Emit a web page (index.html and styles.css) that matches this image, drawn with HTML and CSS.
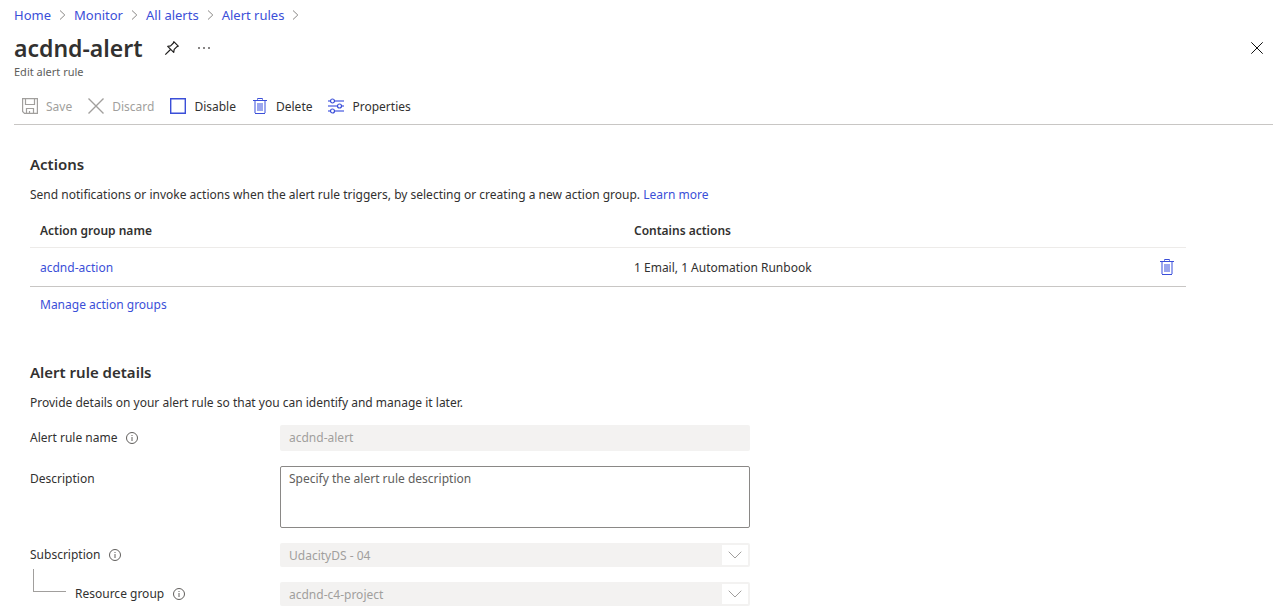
FILE: index.html
```html
<!DOCTYPE html>
<html lang="en">
<head>
<meta charset="utf-8">
<meta name="viewport" content="width=device-width, initial-scale=1">
<title>acdnd-alert - Edit alert rule</title>
<link rel="stylesheet" href="styles.css">
</head>
<body>
<svg class="sprite" aria-hidden="true">
  <symbol id="chevron-right" viewBox="0 0 7 12"><path d="M1 1.5 5.8 6 1 10.5" fill="none" stroke="#8a8886"/></symbol>
  <symbol id="trash" viewBox="0 0 16 16">
    <path d="M3 3v12M13 3v12" stroke="#9ba6ee" stroke-width="2" fill="none"/>
    <path d="M5 5h6v8H5z" fill="#9ba6ee"/>
    <path d="M1 2.500h14M3 15.500h10M6 .5h4" stroke="#3b4fd8" fill="none"/>
    <path d="M5.500 0v2M10.500 0v2" stroke="#7583e5" fill="none"/>
  </symbol>
  <symbol id="info" viewBox="0 0 12 12"><circle cx="6" cy="6" r="5.500" fill="none" stroke="#605e5c"/><path d="M6 5v4M6 3v1" stroke="#605e5c"/></symbol>
  <symbol id="chevron-down" viewBox="0 0 14 8"><path d="M.7 .7 7 7 13.300 .7" fill="none" stroke="#a19f9d"/></symbol>
</svg>
<header class="header">
  <nav class="breadcrumb" aria-label="Breadcrumb">
    <a href="#">Home</a><svg class="crumb-sep"><use href="#chevron-right"/></svg>
    <a href="#">Monitor</a><svg class="crumb-sep"><use href="#chevron-right"/></svg>
    <a href="#">All alerts</a><svg class="crumb-sep"><use href="#chevron-right"/></svg>
    <a href="#">Alert rules</a><svg class="crumb-sep"><use href="#chevron-right"/></svg>
  </nav>
  <div class="title-row">
    <h1 class="title">acdnd-alert</h1>
    <button class="icon-button pin" aria-label="Pin">
      <svg width="16" height="16" viewBox="0 0 16 16" fill="none" stroke="#201f1e" stroke-width="1.200" stroke-linejoin="round"><path d="M9.800 1.700 14.300 6.200 13 6.600 10.200 9.400 9.700 12.300 3.700 6.300 6.600 5.800 9.400 3ZM6.500 9.500 1.300 14.700"/></svg>
    </button>
    <button class="icon-button more" aria-label="More">
      <svg width="14" height="4" viewBox="0 0 14 4" fill="#605e5c"><circle cx="2" cy="2" r="1"/><circle cx="7" cy="2" r="1"/><circle cx="12" cy="2" r="1"/></svg>
    </button>
    <button class="icon-button close" aria-label="Close">
      <svg width="12" height="12" viewBox="0 0 12 12" stroke="#111"><path d="M.3.3 11.700 11.700M11.700.3.3 11.700"/></svg>
    </button>
  </div>
  <p class="subtitle">Edit alert rule</p>
</header>
<div class="toolbar" role="toolbar" aria-label="Alert rule commands">
  <button class="command" disabled>
    <svg width="16" height="16" viewBox="0 0 16 16" fill="none" stroke="#a19f9d" stroke-width="1.200"><path d="M.6.600h14.800v14.800H2.500L.6 13.500ZM3.500.500v6h9v-6M4.500 15.500v-5h7v5M7.500 15.500v-2.500"/></svg>
    <span class="command-text">Save</span>
  </button>
  <button class="command" disabled>
    <svg width="16" height="16" viewBox="0 0 16 16" fill="none" stroke="#a19f9d" stroke-width="1.400"><path d="M.5.500l15 15M15.500.500l-15 15"/></svg>
    <span class="command-text">Discard</span>
  </button>
  <button class="command">
    <svg width="16" height="16" viewBox="0 0 16 16" fill="none" stroke="#3b4fd8" stroke-width="1.400"><path d="M.7.700h14.600v14.600H.7z"/></svg>
    <span class="command-text">Disable</span>
  </button>
  <button class="command">
    <svg width="16" height="16"><use href="#trash"/></svg>
    <span class="command-text">Delete</span>
  </button>
  <button class="command">
    <svg width="16" height="16" viewBox="0 0 16 16"><path d="M0 3h16M0 8h16M0 13h16" stroke="#8f9bec" stroke-width="2"/><g fill="#fff" stroke="#3b4fd8" stroke-width="1.200"><circle cx="4.500" cy="3" r="2"/><circle cx="11.500" cy="8" r="2"/><circle cx="4.500" cy="13" r="2"/></g></svg>
    <span class="command-text">Properties</span>
  </button>
</div>
<main class="content">
  <section class="actions">
    <h2 class="heading">Actions</h2>
    <p class="intro">Send notifications or invoke actions when the alert rule triggers, by selecting or creating a new action group. <a href="#">Learn more</a></p>
    <table class="groups">
      <thead>
        <tr><th class="col-name">Action group name</th><th>Contains actions</th><th class="col-delete"></th></tr>
      </thead>
      <tbody>
        <tr>
          <td><a href="#">acdnd-action</a></td>
          <td>1 Email, 1 Automation Runbook</td>
          <td class="col-delete"><button class="icon-button" aria-label="Remove acdnd-action"><svg width="16" height="16"><use href="#trash"/></svg></button></td>
        </tr>
      </tbody>
    </table>
    <a class="manage" href="#">Manage action groups</a>
  </section>
  <section class="details">
    <h2 class="heading">Alert rule details</h2>
    <p class="intro">Provide details on your alert rule so that you can identify and manage it later.</p>
    <form class="form">
      <div class="field">
        <label class="label" for="rule-name">Alert rule name <svg class="info"><use href="#info"/></svg></label>
        <input class="control name" id="rule-name" type="text" value="acdnd-alert" disabled>
      </div>
      <div class="field">
        <label class="label label-top" for="description">Description</label>
        <textarea class="control description" id="description" placeholder="Specify the alert rule description"></textarea>
      </div>
      <div class="field">
        <label class="label" for="subscription">Subscription <svg class="info"><use href="#info"/></svg></label>
        <div class="dropdown">
          <select class="control" id="subscription" disabled><option>UdacityDS - 04</option></select>
          <span class="arrow"><svg width="14" height="8"><use href="#chevron-down"/></svg></span>
        </div>
      </div>
      <div class="field">
        <div class="nested">
          <span class="branch"></span>
          <label class="label" for="resource-group">Resource group <svg class="info"><use href="#info"/></svg></label>
        </div>
        <div class="dropdown">
          <select class="control" id="resource-group" disabled><option>acdnd-c4-project</option></select>
          <span class="arrow"><svg width="14" height="8"><use href="#chevron-down"/></svg></span>
        </div>
      </div>
    </form>
  </section>
</main>
</body>
</html>
```
FILE: styles.css
```css
* { box-sizing: border-box; }

body {
  margin: 0;
  background: #fff;
  color: #323130;
  font: 12px/18px "Noto Sans", "Open Sans", sans-serif;
}

h1, h2, p { margin: 0; }
a { color: #3b4fd8; text-decoration: none; }
button, input, textarea, select { font: inherit; color: inherit; }
svg { flex: none; }
.sprite { display: none; }

.header { padding: 5px 14px 0; }
.breadcrumb { display: flex; align-items: center; gap: 8px; font-size: 13px; line-height: 20px; }
.crumb-sep { width: 7px; height: 12px; }

.title-row { display: flex; align-items: center; height: 32px; margin-top: 7px; }
.title { font-size: 23px; line-height: 32px; font-weight: 600; }
.icon-button { display: flex; padding: 0; border: 0; background: none; cursor: pointer; }
.pin { margin-left: 21px; }
.more { margin-left: 17px; }
.close { margin-left: auto; margin-right: 1px; }
.subtitle { color: #605e5c; font-size: 11px; line-height: 16px; }

.toolbar {
  display: flex;
  gap: 16px;
  height: 45px;
  margin: 0 5px 0 14px;
  padding: 8px 8px 0;
  border-bottom: 1px solid #c8c6c4;
}
.command { display: flex; align-items: center; gap: 8px; height: 36px; padding: 0; border: 0; background: none; white-space: nowrap; }
.command-text { padding-top: 2px; }
.command:disabled { color: #a19f9d; }

.content { padding: 29px 92px 0 30px; }
.heading { font-size: 15px; line-height: 20px; font-weight: 600; }
.intro { margin-top: 11px; line-height: 20px; }

.groups { width: 100%; margin-top: 8px; border-collapse: collapse; table-layout: fixed; }
.groups th, .groups td { padding: 2px 10px 0; text-align: left; }
.groups th { height: 34px; border-bottom: 1px solid #edebe9; font-weight: 600; }
.groups td { height: 39px; border-bottom: 1px solid #c8c6c4; }
.groups .col-name { width: 594px; }
.groups .col-delete { width: 37px; padding-top: 0; }
.manage { display: block; width: fit-content; margin: 8px 10px 0; line-height: 20px; }

.details { margin-top: 47px; }
.form { max-width: 720px; margin-top: 12px; }
.field { display: grid; grid-template-columns: 250px 1fr; align-items: center; margin-bottom: 15px; }
.field:last-child { margin-bottom: 0; }
.label { display: flex; align-items: center; gap: 9px; }
.label-top { align-self: start; padding-top: 4px; }
.info { width: 12px; height: 12px; }

.control { display: block; width: 100%; height: 24px; margin: 0; padding: 0 9px; border: 0; border-radius: 2px; background: #fff; }
.control:disabled { background: #f3f2f1; color: #a19f9d; opacity: 1; }
.name { height: 26px; }
.description { height: 62px; padding: 3px 8px; border: 1px solid #8a8886; resize: none; }
.description::placeholder { color: #605e5c; opacity: 1; }

.dropdown { display: grid; }
.dropdown > * { grid-area: 1 / 1; }
.dropdown .control { appearance: none; padding-top: 2px; }
.arrow {
  display: flex;
  align-items: center;
  justify-content: center;
  justify-self: end;
  width: 26px;
  margin: 2px;
  background: #fff;
  pointer-events: none;
}

.nested { display: flex; align-items: center; align-self: stretch; gap: 9px; padding-left: 3px; }
.branch { align-self: start; width: 33px; height: 23px; margin-top: -13px; border: solid #a19f9d; border-width: 0 0 1px 1px; }
```
